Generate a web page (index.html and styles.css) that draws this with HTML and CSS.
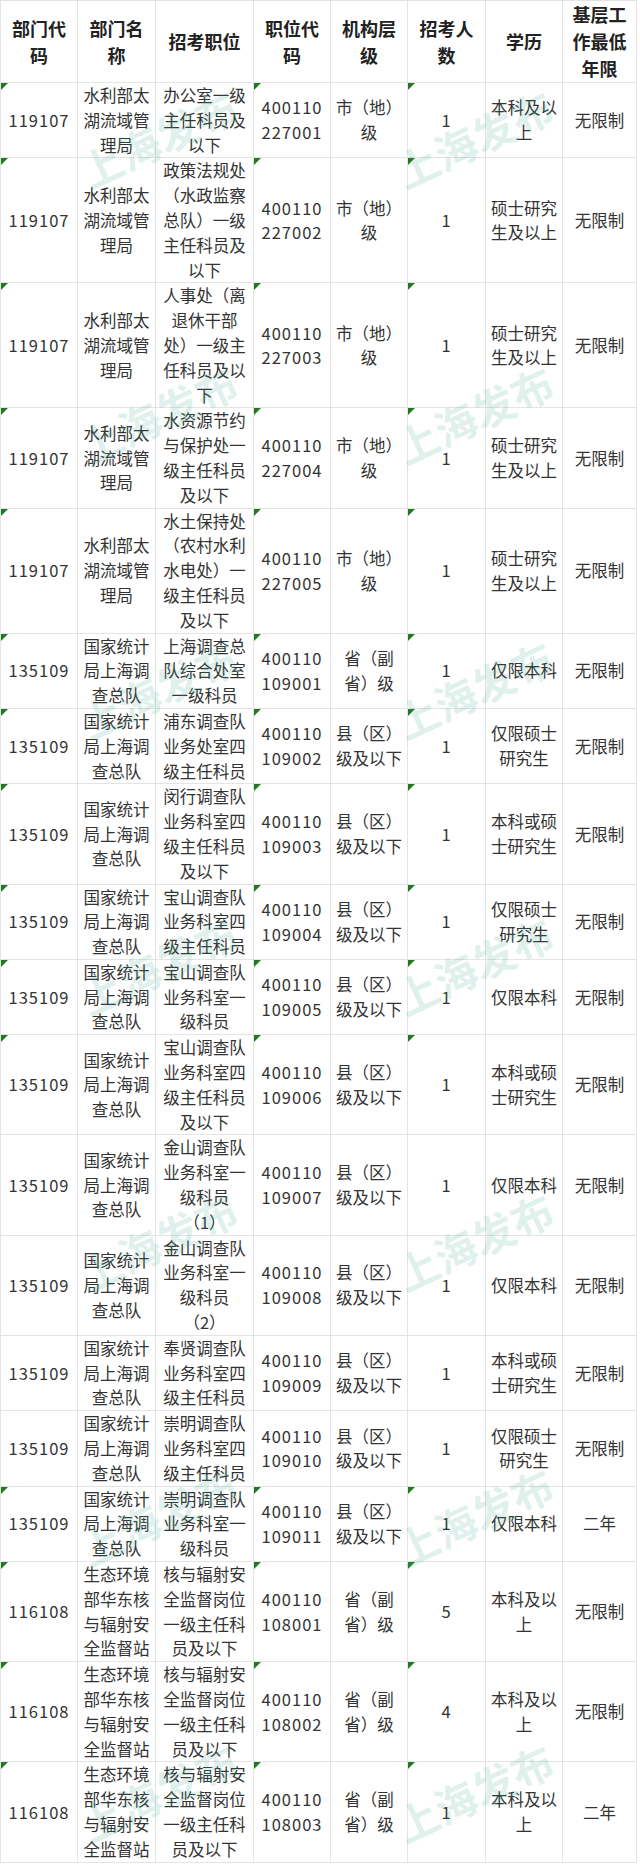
FILE: index.html
```html
<!DOCTYPE html>
<html lang="zh-CN">
<head>
<meta charset="utf-8">
<title>招考职位表</title>
<link rel="stylesheet" href="styles.css">
</head>
<body>
<div class="sheet">
<table class="grid">
<colgroup>
<col class="c1"><col class="c2"><col class="c3"><col class="c4"><col class="c5"><col class="c6"><col class="c7"><col class="c8">
</colgroup>
<thead>
<tr><th>部门代码</th><th>部门名称</th><th>招考职位</th><th>职位代码</th><th>机构层级</th><th>招考人数</th><th>学历</th><th>基层工作最低年限</th></tr>
</thead>
<tbody>
<tr><td class="num mark">119107</td><td>水利部太湖流域管理局</td><td>办公室一级主任科员及以下</td><td class="num mark">400110<br>227001</td><td>市（地）级</td><td class="num mark">1</td><td>本科及以上</td><td>无限制</td></tr>
<tr><td class="num mark">119107</td><td>水利部太湖流域管理局</td><td>政策法规处（水政监察总队）一级主任科员及以下</td><td class="num mark">400110<br>227002</td><td>市（地）级</td><td class="num mark">1</td><td>硕士研究生及以上</td><td>无限制</td></tr>
<tr><td class="num mark">119107</td><td>水利部太湖流域管理局</td><td>人事处（离退休干部处）一级主任科员及以下</td><td class="num mark">400110<br>227003</td><td>市（地）级</td><td class="num mark">1</td><td>硕士研究生及以上</td><td>无限制</td></tr>
<tr><td class="num mark">119107</td><td>水利部太湖流域管理局</td><td>水资源节约与保护处一级主任科员及以下</td><td class="num mark">400110<br>227004</td><td>市（地）级</td><td class="num mark">1</td><td>硕士研究生及以上</td><td>无限制</td></tr>
<tr><td class="num mark">119107</td><td>水利部太湖流域管理局</td><td>水土保持处（农村水利水电处）一级主任科员及以下</td><td class="num mark">400110<br>227005</td><td>市（地）级</td><td class="num mark">1</td><td>硕士研究生及以上</td><td>无限制</td></tr>
<tr><td class="num mark">135109</td><td>国家统计局上海调查总队</td><td>上海调查总队综合处室一级科员</td><td class="num mark">400110<br>109001</td><td>省（副省）级</td><td class="num mark">1</td><td>仅限本科</td><td>无限制</td></tr>
<tr><td class="num mark">135109</td><td>国家统计局上海调查总队</td><td>浦东调查队业务处室四级主任科员</td><td class="num mark">400110<br>109002</td><td>县（区）级及以下</td><td class="num mark">1</td><td>仅限硕士研究生</td><td>无限制</td></tr>
<tr><td class="num mark">135109</td><td>国家统计局上海调查总队</td><td>闵行调查队业务科室四级主任科员及以下</td><td class="num mark">400110<br>109003</td><td>县（区）级及以下</td><td class="num mark">1</td><td>本科或硕士研究生</td><td>无限制</td></tr>
<tr><td class="num mark">135109</td><td>国家统计局上海调查总队</td><td>宝山调查队业务科室四级主任科员</td><td class="num mark">400110<br>109004</td><td>县（区）级及以下</td><td class="num mark">1</td><td>仅限硕士研究生</td><td>无限制</td></tr>
<tr><td class="num mark">135109</td><td>国家统计局上海调查总队</td><td>宝山调查队业务科室一级科员</td><td class="num mark">400110<br>109005</td><td>县（区）级及以下</td><td class="num mark">1</td><td>仅限本科</td><td>无限制</td></tr>
<tr><td class="num mark">135109</td><td>国家统计局上海调查总队</td><td>宝山调查队业务科室四级主任科员及以下</td><td class="num mark">400110<br>109006</td><td>县（区）级及以下</td><td class="num mark">1</td><td>本科或硕士研究生</td><td>无限制</td></tr>
<tr><td class="num">135109</td><td>国家统计局上海调查总队</td><td>金山调查队业务科室一级科员（1）</td><td class="num">400110<br>109007</td><td>县（区）级及以下</td><td class="num">1</td><td>仅限本科</td><td>无限制</td></tr>
<tr><td class="num">135109</td><td>国家统计局上海调查总队</td><td>金山调查队业务科室一级科员（2）</td><td class="num">400110<br>109008</td><td>县（区）级及以下</td><td class="num">1</td><td>仅限本科</td><td>无限制</td></tr>
<tr><td class="num">135109</td><td>国家统计局上海调查总队</td><td>奉贤调查队业务科室四级主任科员</td><td class="num">400110<br>109009</td><td>县（区）级及以下</td><td class="num">1</td><td>本科或硕士研究生</td><td>无限制</td></tr>
<tr><td class="num">135109</td><td>国家统计局上海调查总队</td><td>崇明调查队业务科室四级主任科员</td><td class="num">400110<br>109010</td><td>县（区）级及以下</td><td class="num">1</td><td>仅限硕士研究生</td><td>无限制</td></tr>
<tr><td class="num mark">135109</td><td>国家统计局上海调查总队</td><td>崇明调查队业务科室一级科员</td><td class="num mark">400110<br>109011</td><td>县（区）级及以下</td><td class="num mark">1</td><td>仅限本科</td><td>二年</td></tr>
<tr><td class="num mark">116108</td><td>生态环境部华东核与辐射安全监督站</td><td>核与辐射安全监督岗位一级主任科员及以下</td><td class="num mark">400110<br>108001</td><td>省（副省）级</td><td class="num mark">5</td><td>本科及以上</td><td>无限制</td></tr>
<tr><td class="num mark">116108</td><td>生态环境部华东核与辐射安全监督站</td><td>核与辐射安全监督岗位一级主任科员及以下</td><td class="num mark">400110<br>108002</td><td>省（副省）级</td><td class="num mark">4</td><td>本科及以上</td><td>无限制</td></tr>
<tr><td class="num mark">116108</td><td>生态环境部华东核与辐射安全监督站</td><td>核与辐射安全监督岗位一级主任科员及以下</td><td class="num mark">400110<br>108003</td><td>省（副省）级</td><td class="num mark">1</td><td>本科及以上</td><td>二年</td></tr>
</tbody>
</table>
<div class="watermarks" aria-hidden="true">
<span>上海发布</span><span>上海发布</span>
<span>上海发布</span><span>上海发布</span>
<span>上海发布</span><span>上海发布</span>
<span>上海发布</span><span>上海发布</span>
<span>上海发布</span><span>上海发布</span>
<span>上海发布</span><span>上海发布</span>
<span>上海发布</span><span>上海发布</span>
</div>
</div>
</body>
</html>
```
FILE: styles.css
```css
html, body {
  margin: 0;
  padding: 0;
  background: #ffffff;
}

body {
  font-family: "Noto Sans CJK SC", "Noto Sans", sans-serif;
  color: #333333;
}

.sheet {
  position: relative;
  width: 640px;
  overflow: hidden;
}

.grid {
  border-collapse: collapse;
  table-layout: fixed;
  width: 636px;
  text-spacing-trim: space-all;
}

.c1 { width: 77px; }
.c2 { width: 78px; }
.c3 { width: 98px; }
.c4 { width: 77px; }
.c5 { width: 77px; }
.c6 { width: 78px; }
.c7 { width: 77px; }
.c8 { width: 74px; }

.grid th,
.grid td {
  border: 1px solid #e4e4e4;
  text-align: center;
  vertical-align: middle;
  padding: 0 4px;
}

.grid th {
  font-size: 18px;
  font-weight: 700;
  line-height: 27px;
  color: #222222;
}

.grid td {
  font-size: 16.5px;
  line-height: 24.8px;
  color: #333333;
}

.grid td.num {
  letter-spacing: 1px;
  white-space: nowrap;
}

.grid td.mark {
  position: relative;
}

.grid td.mark::before {
  content: "";
  position: absolute;
  left: 0;
  top: 0;
  width: 0;
  height: 0;
  border-top: 7px solid #1f7a1f;
  border-right: 7px solid transparent;
}

.watermarks {
  position: absolute;
  left: 0;
  top: 0;
  width: 632px;
  height: 1865px;
  pointer-events: none;
  display: grid;
  grid-template-columns: 316px 316px;
  grid-template-rows: repeat(7, 275.7px);
  align-items: center;
  justify-items: center;
}

.watermarks span {
  display: block;
  font-family: "Noto Sans CJK SC", sans-serif;
  font-size: 42px;
  line-height: 50px;
  font-weight: 700;
  color: rgba(60, 170, 140, 0.17);
  white-space: nowrap;
  transform: rotate(-25deg);
}
```
